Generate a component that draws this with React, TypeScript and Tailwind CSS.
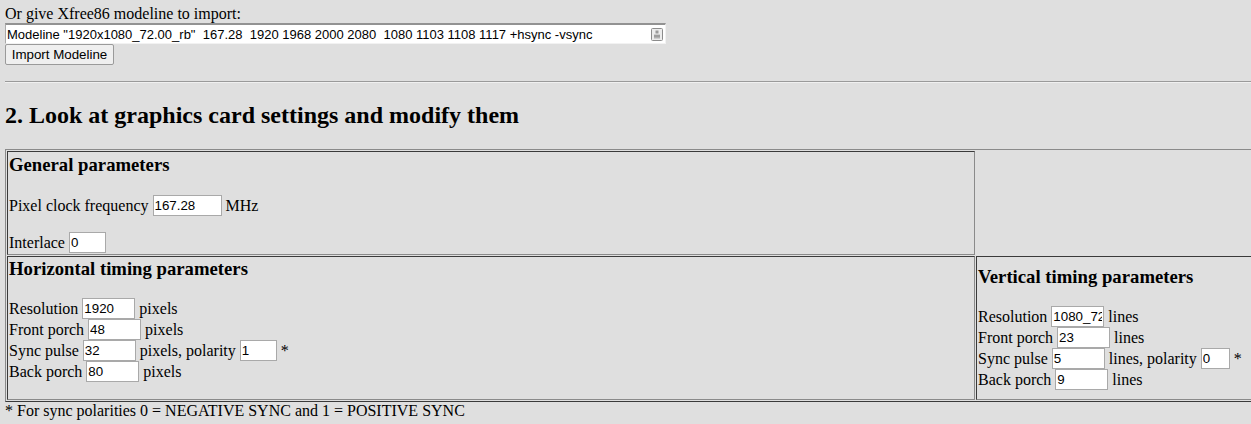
import React from 'react';

const serif = "font-['Liberation_Serif','Times_New_Roman',serif]";
const sans = "font-['Liberation_Sans',Arial,sans-serif]";

interface FieldProps {
  value: string;
  width: string;
}

// small boxed text field as the old form renders it
const Field: React.FC<FieldProps> = ({ value, width }) => (
  <input
    type="text"
    defaultValue={value}
    className={`${width} h-[21px] shrink-0 border border-[#a9a9a9] bg-white px-[1px] text-[13.33px] leading-[15px] text-black outline-none ${sans}`}
  />
);

interface RowProps {
  label: string;
  value: string;
  width: string;
  unit: string;
  polarity?: { value: string; width: string };
}

const Row: React.FC<RowProps> = ({ label, value, width, unit, polarity }) => (
  <div className="flex h-[21px] items-center gap-[4px] whitespace-nowrap leading-[18px]">
    <span>{label}</span>
    <Field value={value} width={width} />
    <span>{unit}</span>
    {polarity && (
      <>
        <Field value={polarity.value} width={polarity.width} />
        <span>*</span>
      </>
    )}
  </div>
);

const cell =
  'border border-t-[#3a3a3a] border-l-[#3a3a3a] border-r-[#8a8a8a] border-b-[#8a8a8a] p-[1px]';

const Heading: React.FC<{ children: React.ReactNode }> = ({ children }) => (
  <h3 className="text-[18.72px] font-bold leading-[21px] whitespace-nowrap">{children}</h3>
);

export default function App() {
  return (
    <div className={`h-[424px] w-[1251px] overflow-hidden bg-[#dfdfdf] text-[16px] text-black ${serif}`}>
      <div className="w-[1320px] pl-[5px] pt-[4px]">
        {/* Modeline import */}
        <div className="leading-[19px]">Or give Xfree86 modeline to import:</div>
        <div className="relative w-[661px]">
          <input
            type="text"
            defaultValue={'Modeline "1920x1080_72.00_rb"  167.28  1920 1968 2000 2080  1080 1103 1108 1117 +hsync -vsync'}
            className={`block h-[21px] w-[661px] border-t-2 border-l border-r border-b border-t-[#929292] border-l-[#a9a9a9] border-r-[#f2f2f2] border-b-[#f2f2f2] bg-white pl-[1px] pr-[20px] text-[13px] text-black outline-none ${sans}`}
          />
          <svg
            className="absolute left-[646px] top-[5px]"
            width="12"
            height="13"
            viewBox="0 0 12 13"
          >
            <rect x="0.5" y="0.5" width="11" height="12" rx="1" fill="#ececec" stroke="#8c8c8c" />
            <rect x="4.5" y="2.5" width="3" height="3" fill="#9a9a9a" />
            <rect x="3" y="6.5" width="6" height="4" fill="#b0b0b0" />
            <line x1="3" y1="8" x2="9" y2="8" stroke="#8c8c8c" strokeWidth="1" />
          </svg>
        </div>
        <button
          type="button"
          className={`block h-[21px] w-[109px] rounded-[2px] border border-[#9a9a9a] bg-[#efefef] text-center text-[13.33px] leading-[15px] text-black ${sans}`}
        >
          Import Modeline
        </button>

        <div className="mt-[16px] h-[2px] border-t border-b border-t-[#9a9a9a] border-b-[#f0f0f0]" />

        <h2 className="mt-[18px] text-[24px] font-bold leading-[28px]">
          2. Look at graphics card settings and modify them
        </h2>

        {/* Settings table */}
        <div className="mt-[20px] w-[1300px] border border-t-[#8a8a8a] border-l-[#8a8a8a] border-r-[#3a3a3a] border-b-[#3a3a3a] p-[1px]">
          <div className="grid grid-cols-[968px_1fr] gap-[1px]">
            <div className={cell}>
              <div className="pt-[1px]">
                <Heading>General parameters</Heading>
              </div>
              <div className="mt-[20px] flex h-[21px] items-center gap-[4px] whitespace-nowrap">
                <span>Pixel clock frequency</span>
                <Field value="167.28" width="w-[69px]" />
                <span>MHz</span>
              </div>
              <div className="mt-[16px] flex h-[21px] items-center gap-[4px] whitespace-nowrap">
                <span>Interlace</span>
                <Field value="0" width="w-[37px]" />
              </div>
            </div>
            <div />

            <div className={`${cell}`}>
              <div className="pb-[16px]">
                <Heading>Horizontal timing parameters</Heading>
                <div className="mt-[19px]">
                  <Row label="Resolution" value="1920" width="w-[53px]" unit="pixels" />
                  <Row label="Front porch" value="48" width="w-[53px]" unit="pixels" />
                  <Row
                    label="Sync pulse"
                    value="32"
                    width="w-[53px]"
                    unit="pixels, polarity"
                    polarity={{ value: '1', width: 'w-[37px]' }}
                  />
                  <Row label="Back porch" value="80" width="w-[53px]" unit="pixels" />
                </div>
              </div>
            </div>
            <div className={`${cell} flex flex-col justify-center`}>
              <Heading>Vertical timing parameters</Heading>
              <div className="mt-[19px]">
                <Row label="Resolution" value="1080_72.00_rb" width="w-[53px]" unit="lines" />
                <Row label="Front porch" value="23" width="w-[53px]" unit="lines" />
                <Row
                  label="Sync pulse"
                  value="5"
                  width="w-[53px]"
                  unit="lines, polarity"
                  polarity={{ value: '0', width: 'w-[29px]' }}
                />
                <Row label="Back porch" value="9" width="w-[53px]" unit="lines" />
              </div>
            </div>
          </div>
        </div>

        <div className="leading-[18px]">* For sync polarities 0 = NEGATIVE SYNC and 1 = POSITIVE SYNC</div>
      </div>
    </div>
  );
}
